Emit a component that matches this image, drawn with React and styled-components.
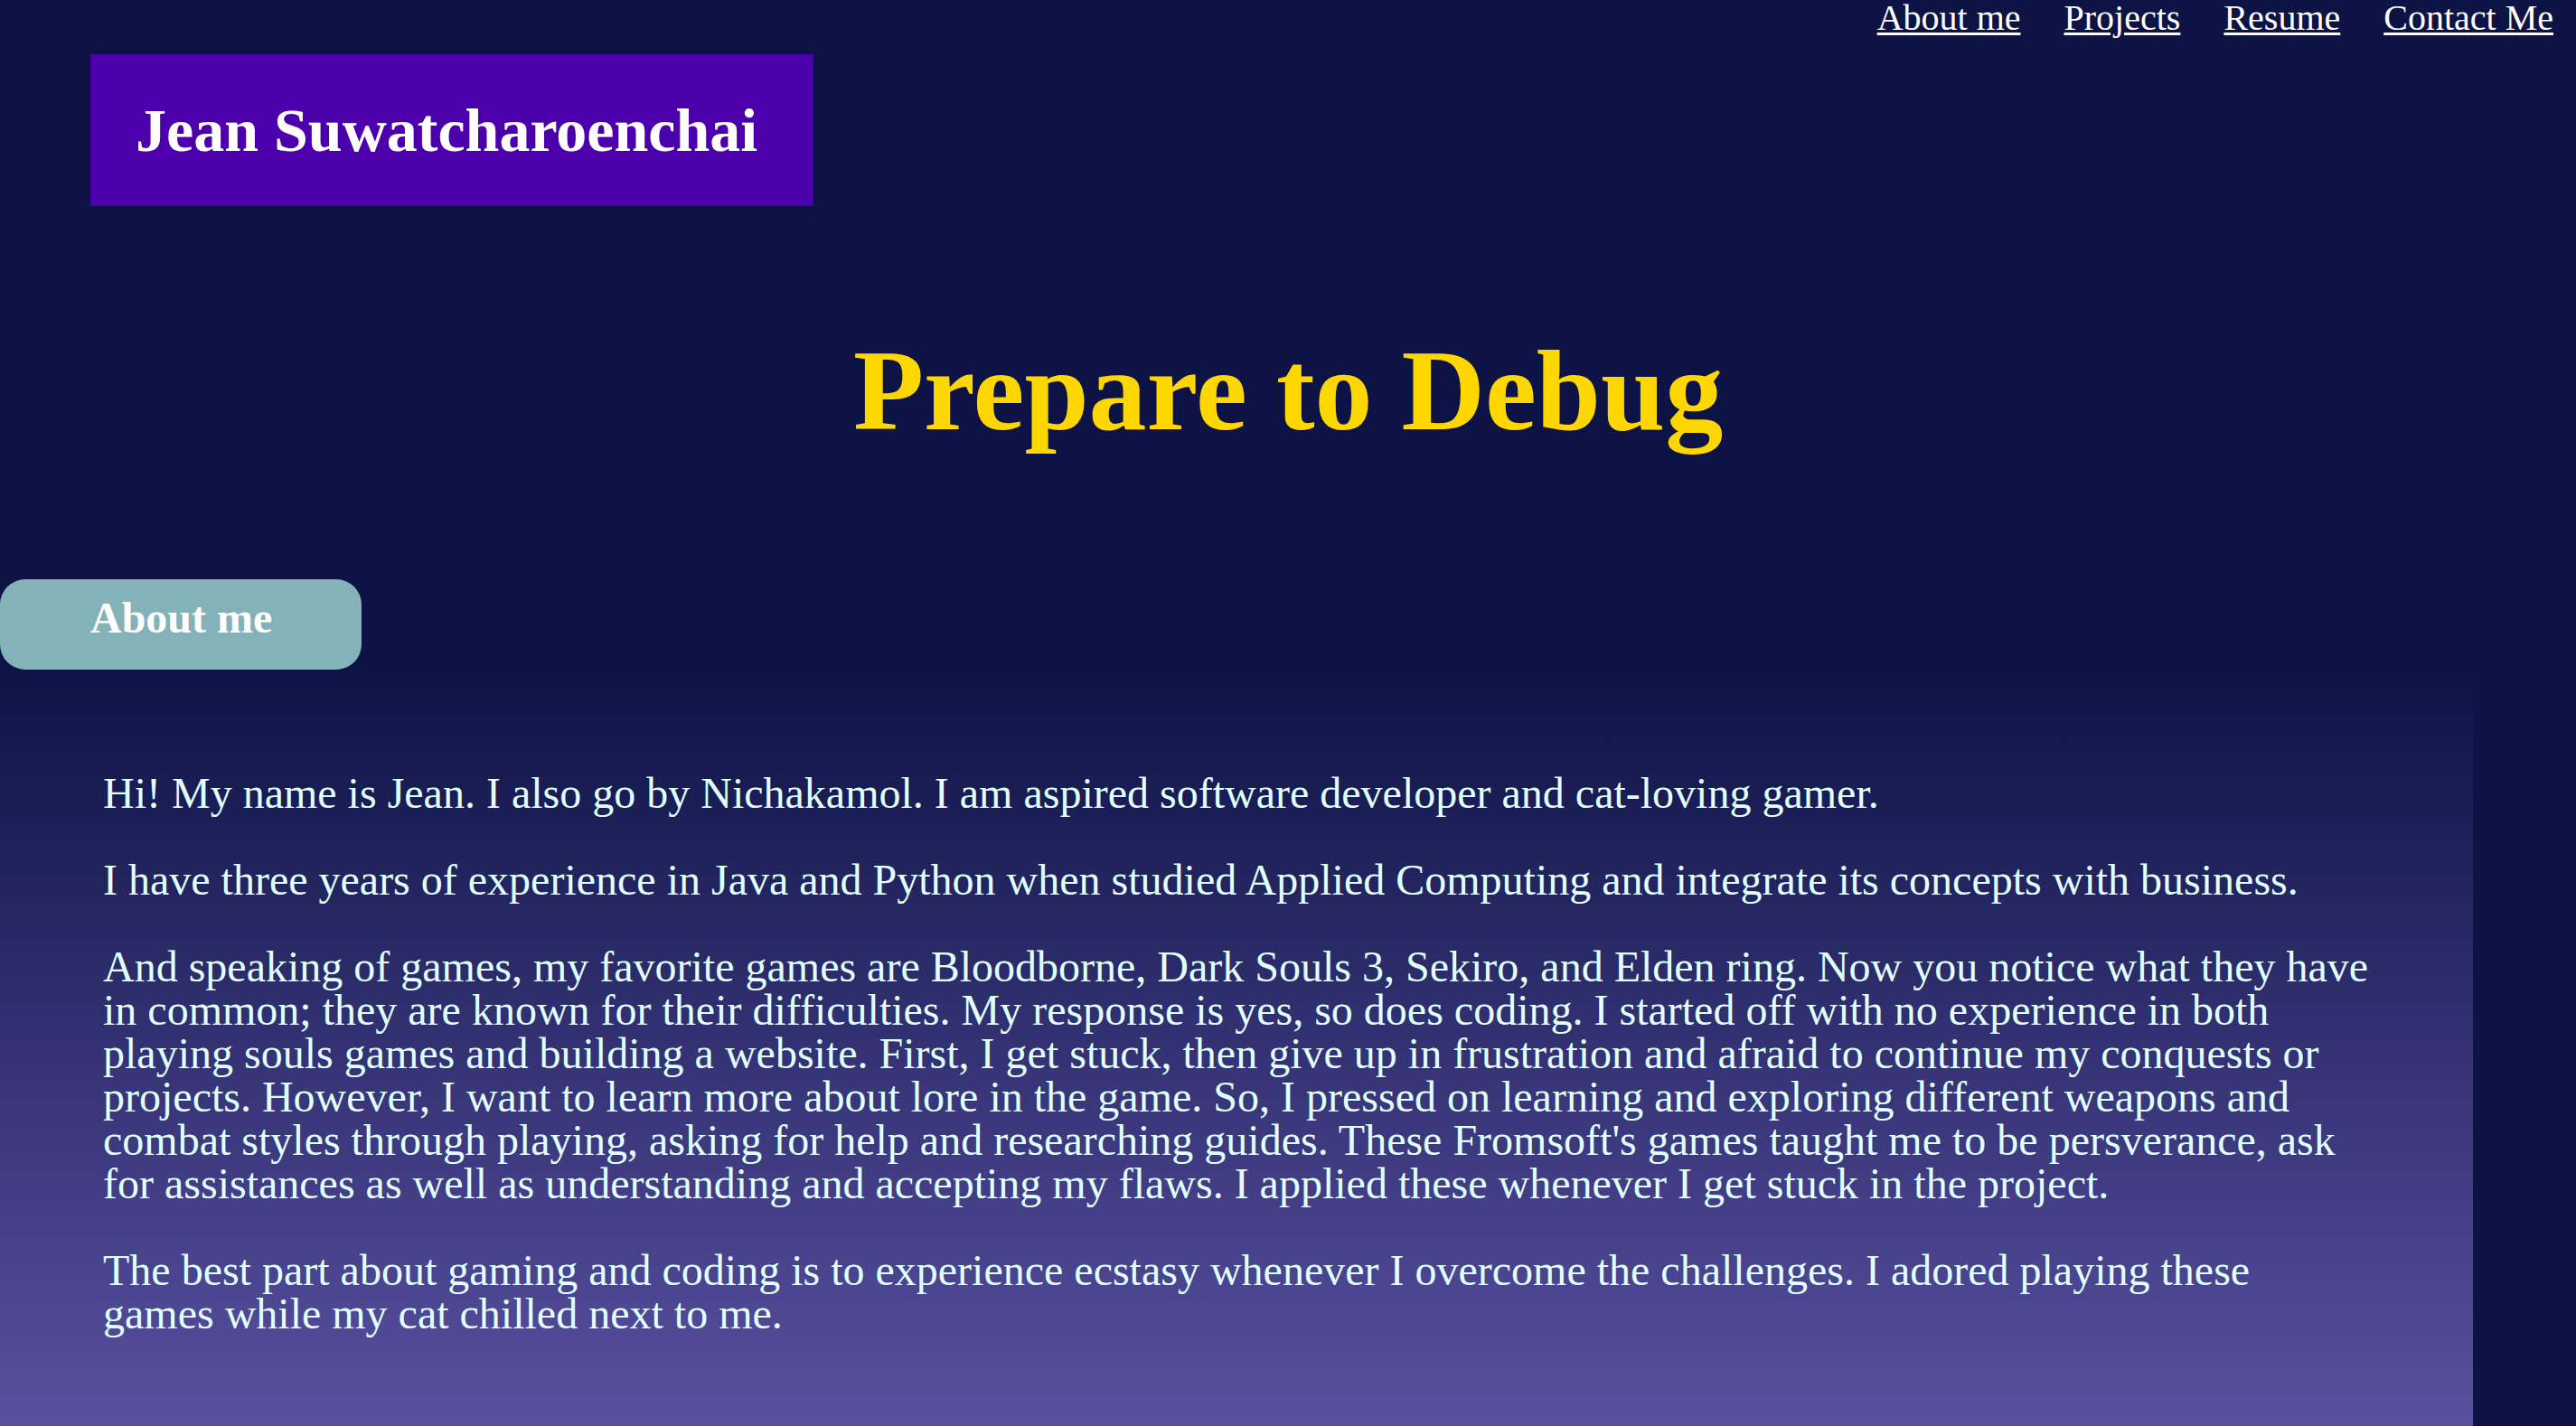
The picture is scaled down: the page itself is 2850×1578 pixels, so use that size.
import React from "react";
import styled, { createGlobalStyle } from "styled-components";

const GlobalStyle = createGlobalStyle`
  html, body {
    margin: 0;
    padding: 0;
    background: #0d1345;
    overflow: hidden;
  }
  body {
    font-family: "Liberation Serif", "Times New Roman", serif;
  }
`;

const StyledPage = styled.div`
  display: flex;
  flex-direction: column;
  width: 100%;
  min-height: 1578px;
  background: #0d1345;
`;

const StyledNav = styled.nav`
  display: flex;
  justify-content: flex-end;
  gap: 48px;
  padding-right: 25px;
  height: 40px;
`;

const StyledNavLink = styled.a`
  color: #ffffff;
  font-size: 40px;
  line-height: 1;
  text-decoration: underline;
  text-underline-offset: 3px;
  text-decoration-thickness: 3px;
`;

const StyledNameBox = styled.div`
  align-self: flex-start;
  margin: 20px 0 0 100px;
  width: 800px;
  box-sizing: border-box;
  padding: 50px 50px;
  background: #4b00ab;
  color: #ffffff;
  font-size: 68px;
  font-weight: 700;
  line-height: 1;
  white-space: nowrap;
`;

const StyledTitle = styled.h1`
  margin: 140px 0 0;
  text-align: center;
  color: #ffd700;
  font-size: 128px;
  font-weight: 700;
  line-height: 1;
`;

const StyledTab = styled.h2`
  align-self: flex-start;
  margin: 145px 0 0;
  width: 400px;
  box-sizing: border-box;
  padding: 19px 0 33px 100px;
  background: #83b2b8;
  border-radius: 28px;
  color: #ffffff;
  font-size: 48px;
  font-weight: 700;
  line-height: 1;
`;

const StyledSection = styled.section`
  width: 2736px;
  box-sizing: border-box;
  padding: 65px 114px 53px 114px;
  background: linear-gradient(to bottom, #0d1345 0%, #5a50a1 100%);
`;

const StyledParagraph = styled.p`
  margin: 48px 0;
  color: #e0ffff;
  font-size: 48px;
  line-height: 1;
`;

const navItems = ["About me", "Projects", "Resume", "Contact Me"];

const paragraphs = [
  "Hi! My name is Jean. I also go by Nichakamol. I am aspired software developer and cat-loving gamer.",
  "I have three years of experience in Java and Python when studied Applied Computing and integrate its concepts with business.",
  "And speaking of games, my favorite games are Bloodborne, Dark Souls 3, Sekiro, and Elden ring. Now you notice what they have in common; they are known for their difficulties. My response is yes, so does coding. I started off with no experience in both playing souls games and building a website. First, I get stuck, then give up in frustration and afraid to continue my conquests or projects. However, I want to learn more about lore in the game. So, I pressed on learning and exploring different weapons and combat styles through playing, asking for help and researching guides. These Fromsoft's games taught me to be persverance, ask for assistances as well as understanding and accepting my flaws. I applied these whenever I get stuck in the project.",
  "The best part about gaming and coding is to experience ecstasy whenever I overcome the challenges. I adored playing these games while my cat chilled next to me.",
];

const App = () => {
  return (
    <>
      <GlobalStyle />
      <StyledPage>
        <StyledNav>
          {navItems.map((item) => (
            <StyledNavLink key={item} href="#">
              {item}
            </StyledNavLink>
          ))}
        </StyledNav>
        <StyledNameBox>Jean Suwatcharoenchai</StyledNameBox>
        <StyledTitle>Prepare to Debug</StyledTitle>
        <StyledTab>About me</StyledTab>
        <StyledSection>
          {paragraphs.map((text, i) => (
            <StyledParagraph key={i}>{text}</StyledParagraph>
          ))}
        </StyledSection>
      </StyledPage>
    </>
  );
};

export default App;
